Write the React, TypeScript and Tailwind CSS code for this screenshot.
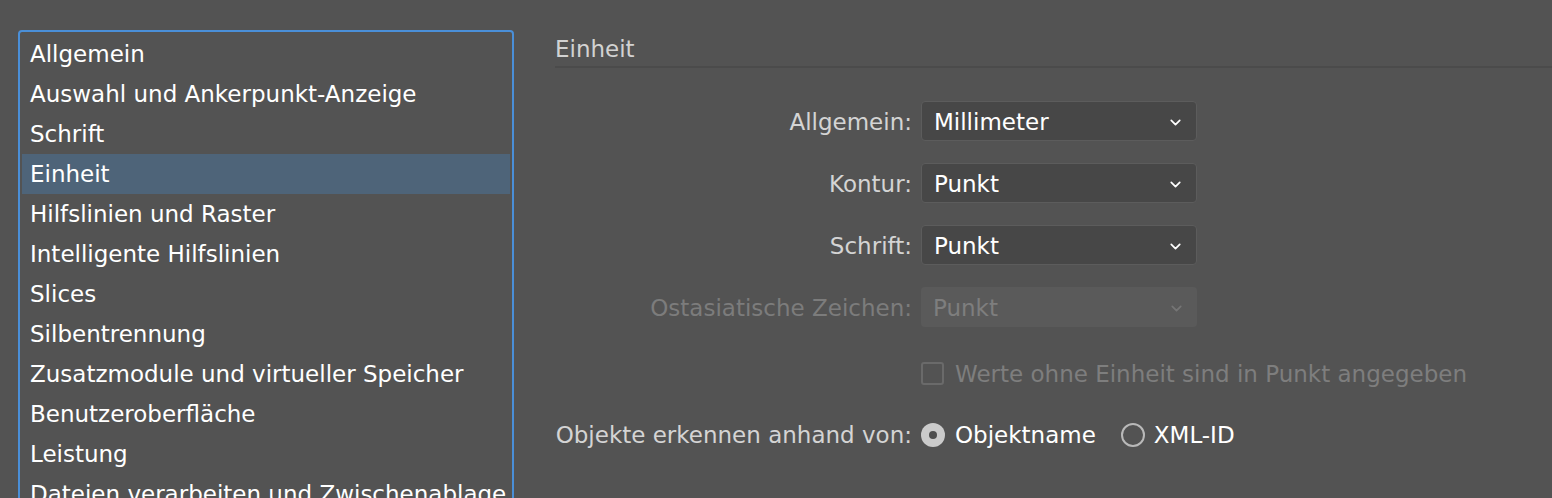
import { ChevronDown } from 'lucide-react'

const items = [
  'Allgemein',
  'Auswahl und Ankerpunkt-Anzeige',
  'Schrift',
  'Einheit',
  'Hilfslinien und Raster',
  'Intelligente Hilfslinien',
  'Slices',
  'Silbentrennung',
  'Zusatzmodule und virtueller Speicher',
  'Benutzeroberfläche',
  'Leistung',
  'Dateien verarbeiten und Zwischenablage',
]

function Select({ value, disabled }: { value: string; disabled?: boolean }) {
  return (
    <div
      className={`flex items-center justify-between h-[40px] w-[276px] rounded-[4px] pl-[12px] pr-[12px] pt-[2px] ${
        disabled ? 'bg-[#5a5a5a] text-[#7e7e7e]' : 'bg-[#474747] border border-[#5c5c5c] text-white'
      }`}
    >
      <span>{value}</span>
      <ChevronDown className={`w-[17px] h-[17px] ${disabled ? 'text-[#757575]' : 'text-white'}`} strokeWidth={2.4} />
    </div>
  )
}

export default function App() {
  const rows = [
    { label: 'Allgemein:', value: 'Millimeter' },
    { label: 'Kontur:', value: 'Punkt' },
    { label: 'Schrift:', value: 'Punkt' },
  ]
  return (
    <div
      className="w-[1552px] h-[498px] overflow-hidden bg-[#535353] flex text-[23px] leading-none"
      style={{ fontFamily: '"DejaVu Sans", "Open Sans", sans-serif' }}
    >
      {/* Left list */}
      <div className="ml-[18px] mt-[30px] w-[496px] h-[500px] border-2 border-[#4a8fd8] rounded-[4px] p-[2px] shrink-0">
        {items.map(item => (
          <div
            key={item}
            className={`h-[40px] flex items-center pl-[8px] text-white whitespace-nowrap ${
              item === 'Einheit' ? 'bg-[#4e6479]' : ''
            }`}
          >
            {item}
          </div>
        ))}
      </div>

      {/* Right panel */}
      <div className="ml-[41px] flex-1 flex flex-col">
        <div className="h-[38px] mt-[30px] pt-[2px] flex items-center text-[#d2d2d2] border-b-2 border-[#4b4b4b]">Einheit</div>

        <div className="mt-[33px] grid grid-cols-[357px_1fr] gap-x-[9px] items-center">
          {rows.map(r => (
            <div key={r.label} className="contents">
              <div className="text-right text-[#d4d4d4] mb-[22px] pt-[2px]">{r.label}</div>
              <div className="mb-[22px]"><Select value={r.value} /></div>
            </div>
          ))}
          <div className="text-right text-[#7c7c7c] pt-[2px]">Ostasiatische Zeichen:</div>
          <div><Select value="Punkt" disabled /></div>

          <div />
          <div className="flex items-center gap-[11px] mt-[34px] h-[24px] text-[#7e7e7e]">
            <div className="w-[23px] h-[23px] rounded-[3px] border-2 border-[#6a6a6a]" />
            <span className="pt-[2px]">Werte ohne Einheit sind in Punkt angegeben</span>
          </div>

          <div className="text-right text-[#d4d4d4] mt-[37px] pt-[2px]">Objekte erkennen anhand von:</div>
          <div className="flex items-center mt-[37px] h-[24px] text-white">
            <div className="w-[24px] h-[24px] rounded-full bg-[#cbcbcb] flex items-center justify-center">
              <div className="w-[8px] h-[8px] rounded-full bg-[#4f4f4f]" />
            </div>
            <span className="ml-[10px] pt-[2px]">Objektname</span>
            <div className="ml-[25px] w-[24px] h-[24px] rounded-full border-2 border-[#b9b9b9]" />
            <span className="ml-[9px] pt-[2px]">XML-ID</span>
          </div>
        </div>
      </div>
    </div>
  )
}
